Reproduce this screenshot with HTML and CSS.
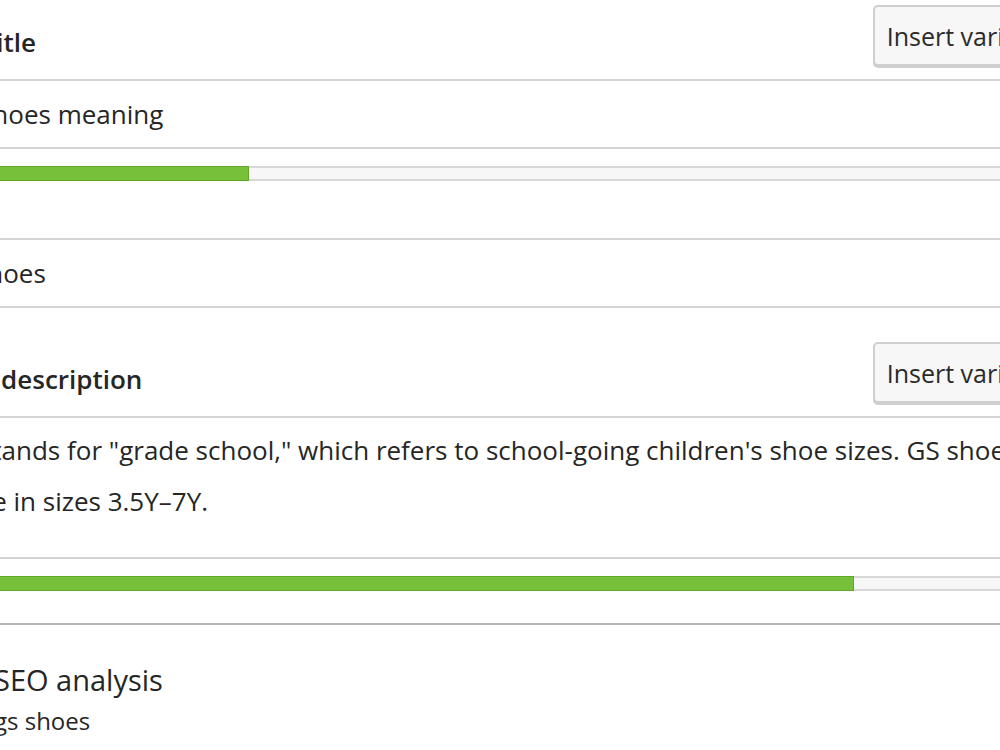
FILE: index.html
```html
<!DOCTYPE html>
<html lang="en">

<head>
    <meta charset="UTF-8">
    <meta name="viewport" content="width=device-width, initial-scale=1.0">
    <title>SEO fields</title>
    <link rel="stylesheet" href="styles.css">
</head>

<body>
    <div class="panel">
        <!-- SEO title -->
        <div class="field-head">
            <label class="field-label">SEO title</label>
            <button class="btn-var">Insert variable</button>
        </div>
        <div class="field-input">GS shoes meaning</div>
        <div class="progress"><span class="progress-fill" style="width: 28.1%"></span></div>

        <!-- Slug -->
        <div class="field-head field-head-plain">
            <label class="field-label">Slug</label>
        </div>
        <div class="field-input">gs-shoes</div>

        <!-- Meta description -->
        <div class="field-head field-head-gap">
            <label class="field-label">Meta description</label>
            <button class="btn-var">Insert variable</button>
        </div>
        <div class="field-input field-area">GS stands for "grade school," which refers to school-going children's shoe sizes. GS shoes<br>come in sizes 3.5Y–7Y.</div>
        <div class="progress"><span class="progress-fill" style="width: 81.4%"></span></div>

        <!-- analysis section -->
        <div class="section">
            <h2 class="section-title">SEO analysis</h2>
            <p class="section-sub">gs shoes</p>
        </div>
    </div>
</body>

</html>
```

FILE: styles.css
```css
* {
    padding: 0;
    margin: 0;
    box-sizing: border-box;
}

html,
body {
    height: 100%;
    overflow: hidden;
    background-color: #fff;
}

body {
    font-family: "Open Sans", "Noto Sans", sans-serif;
    color: #262626;
}

.panel {
    width: 1137px;
    margin-left: -70px;
    padding-top: 5px;
}

.field-head {
    display: flex;
    justify-content: space-between;
    align-items: flex-end;
    height: 61px;
    margin-bottom: 13px;
}

.field-head-plain {
    height: 38px;
    margin-top: 6px;
}

.field-head-gap {
    margin-top: 34px;
}

.field-label {
    font-size: 26px;
    font-weight: 600;
    line-height: 32px;
    margin-bottom: 8px;
}

.btn-var {
    height: 61px;
    padding: 0 12px;
    font: 25px "Open Sans", "Noto Sans", sans-serif;
    color: #2a2a2a;
    background-color: #f7f7f7;
    border: 2px solid #cfcfcf;
    border-radius: 5px;
    box-shadow: 0 2px 0 #cfcfcf;
    align-self: flex-start;
}

.field-input {
    height: 70px;
    padding: 0 8px;
    border: 2px solid #d4d4d4;
    font-size: 26px;
    line-height: 66px;
    white-space: nowrap;
}

.field-area {
    height: 143px;
    padding-top: 7px;
    line-height: 51px;
}

.progress {
    height: 15px;
    margin-top: 17px;
    background-color: #f7f7f7;
    border: 2px solid #d8d8d8;
    border-left: 0;
}

.progress-fill {
    display: block;
    height: 15px;
    margin-top: -2px;
    background-color: #77c03a;
    border: 1px solid #62a62a;
}

.section {
    margin-top: 32px;
    padding-top: 37px;
    padding-left: 64px;
    border-top: 2px solid #b4b4b4;
}

.section-title {
    font-size: 29px;
    font-weight: 400;
    line-height: 36px;
}

.section-sub {
    font-size: 24px;
    line-height: 36px;
    margin-top: 5px;
}
```
